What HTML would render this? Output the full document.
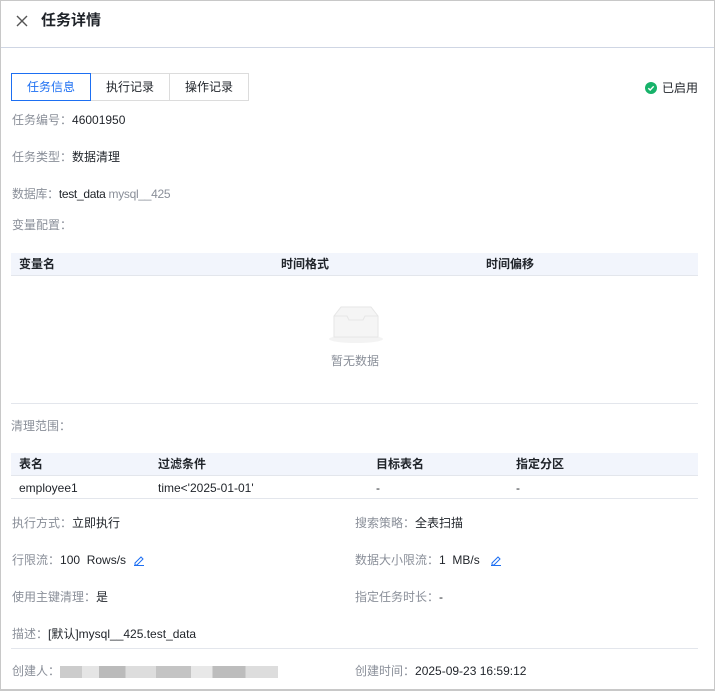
<!DOCTYPE html><html><head><meta charset="utf-8"><style>
*{margin:0;padding:0;box-sizing:border-box}
body{width:715px;height:691px;overflow:hidden;background:#fff;font-family:"Liberation Sans","Noto Sans CJK SC",sans-serif;font-size:12px;color:#1f2329;line-height:16px}
.frame{position:absolute;left:0;top:0;width:715px;height:691px;border:1px solid #c8c8c8;border-bottom:2px solid #c8c8c8}
.abs{position:absolute;white-space:nowrap}
.lb{color:#8a8f99}
.hdr{background:#f2f5fc;position:absolute;left:11px;width:687px;border-bottom:1px solid #e3e6ec;font-weight:bold}
.blur{display:inline-block;height:12px;vertical-align:middle;background:linear-gradient(90deg,#ccc 0 10%,#e5e5e5 10% 18%,#bbb 18% 30%,#ddd 30% 44%,#c4c4c4 44% 60%,#e8e8e8 60% 70%,#bdbdbd 70% 85%,#ddd 85%)}
</style></head><body><div class="frame"></div>
<svg class="abs" style="left:15px;top:14px" width="14" height="14"><path d="M2 2L12 12M12 2L2 12" stroke="#555" stroke-width="1.4"/></svg>
<div class="abs" style="left:41px;top:11px;font-size:15px;line-height:20px;font-weight:bold">任务详情</div>
<div class="abs" style="left:1px;top:47px;width:713px;height:1px;background:#cfd6e4"></div>
<div class="abs" style="left:11px;top:73px;width:80px;height:28px;border:1px solid #1d6ff2;color:#1d6ff2;text-align:center;line-height:26px">任务信息</div>
<div class="abs" style="left:91px;top:73px;width:79px;height:28px;border:1px solid #dcdcdc;border-left:none;text-align:center;line-height:26px">执行记录</div>
<div class="abs" style="left:170px;top:73px;width:79px;height:28px;border:1px solid #dcdcdc;border-left:none;text-align:center;line-height:26px">操作记录</div>
<svg class="abs" style="left:645px;top:82px" width="12" height="12"><circle cx="6" cy="6" r="6" fill="#17b26a"/><path d="M3.3 6.2L5.2 8L8.7 4.3" stroke="#fff" stroke-width="1.4" fill="none"/></svg>
<div class="abs" style="left:662px;top:80px">已启用</div>
<div class="abs" style="left:12px;top:112px"><span class="lb">任务编号：</span>46001950</div>
<div class="abs" style="left:12px;top:149px"><span class="lb">任务类型：</span>数据清理</div>
<div class="abs" style="left:12px;top:186px;letter-spacing:-0.3px"><span class="lb">数据库：</span>test_data <span class="lb">mysql__425</span></div>
<div class="abs" style="left:12px;top:217px"><span class="lb">变量配置：</span></div>
<div class="hdr" style="top:253px;height:23px"><span class="abs" style="left:8px;top:3px">变量名</span><span class="abs" style="left:270px;top:3px">时间格式</span><span class="abs" style="left:475px;top:3px">时间偏移</span></div>
<svg class="abs" style="left:328px;top:306px" width="56" height="38"><ellipse cx="28" cy="33" rx="27" ry="4" fill="#f3f3f3"/><path d="M6 10L13 1H43L50 10V31H6Z" fill="#f5f5f5" stroke="#e6e6e6"/><path d="M6 10H19L21 14H35L37 10H50" fill="none" stroke="#e6e6e6"/></svg>
<div class="abs" style="left:331px;top:353px;color:#8a8f99">暂无数据</div>
<div class="abs" style="left:11px;top:403px;width:687px;height:1px;background:#e3e6ec"></div>
<div class="abs" style="left:11px;top:418px"><span class="lb">清理范围：</span></div>
<div class="hdr" style="top:453px;height:23px"><span class="abs" style="left:8px;top:3px">表名</span><span class="abs" style="left:147px;top:3px">过滤条件</span><span class="abs" style="left:365px;top:3px">目标表名</span><span class="abs" style="left:505px;top:3px">指定分区</span></div>
<div class="abs" style="left:11px;top:498px;width:687px;height:1px;background:#e3e6ec"></div>
<div class="abs" style="left:19px;top:480px">employee1</div><div class="abs" style="left:158px;top:480px">time&lt;'2025-01-01'</div><div class="abs" style="left:376px;top:480px">-</div><div class="abs" style="left:516px;top:480px">-</div>
<div class="abs" style="left:12px;top:515px"><span class="lb">执行方式：</span>立即执行</div>
<div class="abs" style="left:355px;top:515px"><span class="lb">搜索策略：</span>全表扫描</div>
<div class="abs" style="left:12px;top:552px"><span class="lb">行限流：</span>100&nbsp; Rows/s</div>
<svg class="abs" style="left:133px;top:554px" width="12" height="12"><path d="M2 9L8 3L10 5L4 11H2Z" fill="none" stroke="#1d6ff2"/><path d="M1 11.5H11" stroke="#1d6ff2"/></svg>
<div class="abs" style="left:355px;top:552px"><span class="lb">数据大小限流：</span>1&nbsp; MB/s</div>
<svg class="abs" style="left:490px;top:554px" width="12" height="12"><path d="M2 9L8 3L10 5L4 11H2Z" fill="none" stroke="#1d6ff2"/><path d="M1 11.5H11" stroke="#1d6ff2"/></svg>
<div class="abs" style="left:12px;top:589px"><span class="lb">使用主键清理：</span>是</div>
<div class="abs" style="left:355px;top:589px"><span class="lb">指定任务时长：</span>-</div>
<div class="abs" style="left:12px;top:626px"><span class="lb">描述：</span>[默认]mysql__425.test_data</div>
<div class="abs" style="left:11px;top:648px;width:687px;height:1px;background:#e3e6ec"></div>
<div class="abs" style="left:12px;top:663px"><span class="lb">创建人：</span><span class="blur" style="width:218px"></span></div>
<div class="abs" style="left:355px;top:663px"><span class="lb">创建时间：</span>2025-09-23 16:59:12</div>
</body></html>
